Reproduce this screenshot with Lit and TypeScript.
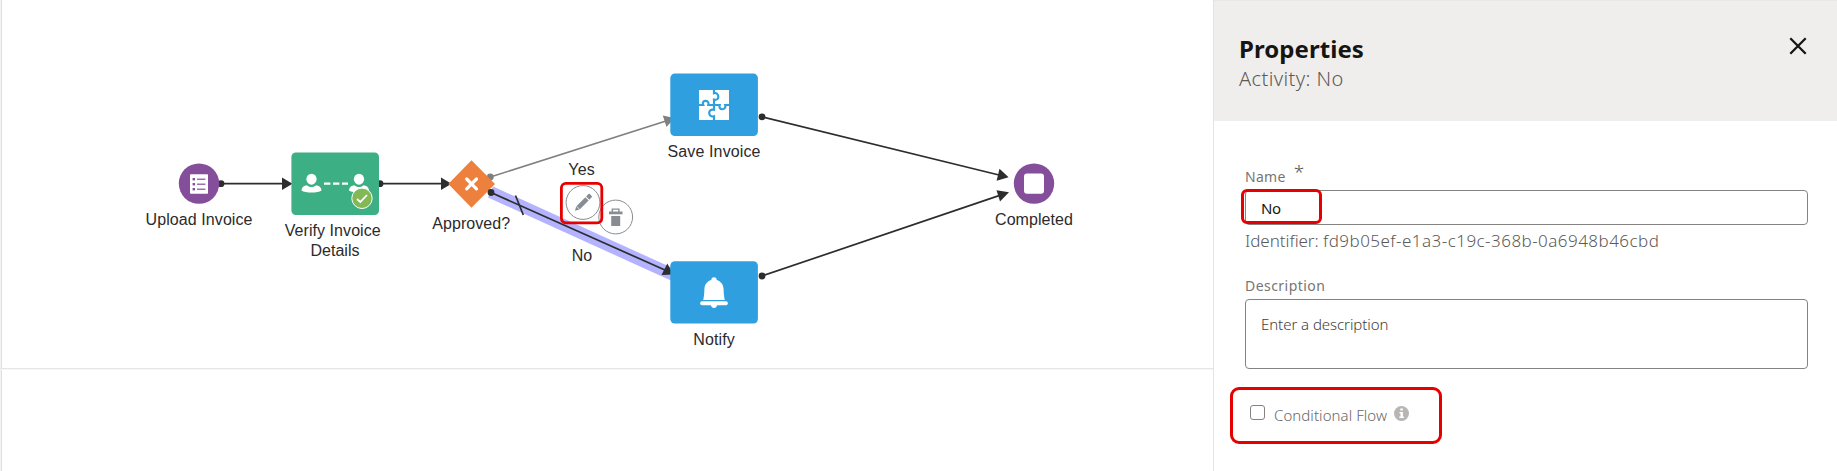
import { LitElement, html, svg, css } from "lit";
import { customElement } from "lit/decorators.js";

interface Label { x: number; y: number; text: string; w: number; }

const LABELS: Label[] = [
  { x: 199, y: 225, text: "Upload Invoice", w: 107 },
  { x: 332.7, y: 236, text: "Verify Invoice", w: 96 },
  { x: 335, y: 256, text: "Details", w: 49 },
  { x: 471.2, y: 229, text: "Approved?", w: 78 },
  { x: 581.5, y: 175, text: "Yes", w: 26.5 },
  { x: 582, y: 260.5, text: "No", w: 20.5 },
  { x: 714, y: 157, text: "Save Invoice", w: 93 },
  { x: 714, y: 345, text: "Notify", w: 41.5 },
  { x: 1034, y: 225, text: "Completed", w: 78 },
];

@customElement("flow-canvas")
class FlowCanvas extends LitElement {
  static styles = css`
    :host { display: block; width: 1213px; height: 471px; background: #fff; }
    svg { display: block; }
    .label { font: 16px "Liberation Sans", Arial, sans-serif; fill: #2b2b2b; text-anchor: middle; }
    .edge { stroke: #2d2d2d; stroke-width: 1.7; fill: none; }
    .ink { fill: #2d2d2d; }
    .start { fill: #854e9b; }
    .task { fill: #3caf85; }
    .service { fill: #309fdf; }
    .tool { fill: #fff; stroke: #878d92; stroke-width: 1; }
    .glyph { fill: #878d92; }
    .mark { fill: none; stroke: #e60000; stroke-width: 2.8; }
    .white { fill: #fff; }
  `;

  render() {
    return html`<svg width="1213" height="471" viewBox="0 0 1213 471">
      <rect x="0" y="0" width="1" height="471" fill="#f4f4f4"/>
      <rect x="1" y="0" width="1" height="471" fill="#dedede"/>
      <rect x="0" y="368" width="1213" height="1" fill="#e6e6e6"/>
      <rect x="0" y="369" width="1213" height="1" fill="#f6f6f6"/>

      <line x1="490.5" y1="192" x2="680" y2="278" stroke="#b3b3ff" stroke-width="12"/>

      <circle class="ink" cx="221" cy="183.7" r="3.4"/>
      <line class="edge" x1="221" y1="183.7" x2="284" y2="183.7"/>
      <path class="ink" d="M282 177.4L292.5 183.7L282 190Z"/>
      <circle class="ink" cx="380" cy="183.7" r="3.4"/>
      <line class="edge" x1="380" y1="183.7" x2="443" y2="183.7"/>
      <path class="ink" d="M441 177.4L451.5 183.7L441 190Z"/>

      <circle cx="490.3" cy="177" r="3.4" fill="#808080"/>
      <line x1="490.3" y1="177" x2="666" y2="121" stroke="#808080" stroke-width="1.6"/>
      <path d="M662.8 115.5L674.5 118L666.5 127Z" fill="#808080"/>

      <line class="edge" x1="491" y1="192.5" x2="666" y2="270.5"/>
      <line class="edge" x1="515.5" y1="195.5" x2="523.3" y2="215"/>
      <path class="ink" d="M667.3 263.5L673.5 274.6L661.5 275Z"/>

      <circle class="ink" cx="762" cy="116.8" r="3.4"/>
      <line class="edge" x1="762" y1="116.8" x2="999" y2="175"/>
      <path class="ink" d="M999.5 168.8L1008.6 177.3L996.6 180.8Z"/>
      <circle class="ink" cx="762" cy="276" r="3.4"/>
      <line class="edge" x1="762" y1="276" x2="999" y2="195.6"/>
      <path class="ink" d="M996.5 190.3L1009 192.2L1000 201.6Z"/>

      <circle class="start" cx="199" cy="183.6" r="20.2"/>
      <rect class="white" x="190" y="174.3" width="18" height="19.4" rx=".8"/>
      ${[179.2, 184.2, 189.2].map((y) => svg`
        <rect class="start" x="192.6" y=${y - 1.2} width="2.4" height="2.4"/>
        <rect class="start" x="197" y=${y - 0.6} width="8.4" height="1.2"/>`)}

      <rect class="task" x="291.4" y="152.4" width="87.6" height="62.6" rx="4.5"/>
      ${[311.5, 359].map((x) => svg`
        <ellipse class="white" cx=${x} cy="179.2" rx="5.1" ry="5.5"/>
        <path class="white" transform="translate(${x} 0)" d="M-10 190.5C-9.5 186.5 -7 185.8 -4.6 185.3C-2.5 187.7 2.5 187.7 4.6 185.3C7 185.8 9.5 186.5 10 190.5C6 193.3 -6 193.3 -10 190.5Z"/>`)}
      <path d="M324 183.7h24" stroke="#fff" stroke-width="2.2" stroke-dasharray="6.4 2.6" fill="none"/>
      <circle cx="362" cy="198.3" r="10.2" fill="#82b955" stroke="#fff" stroke-width="1"/>
      <path d="M357 199L360.3 202L367 195" fill="none" stroke="#fff" stroke-width="1.8"/>

      <path d="M471.5 160.3L495 184L471.5 207.7L448.3 184Z" fill="#ec803c"/>
      <path d="M466.7 179L476.5 188.8M476.5 179L466.7 188.8" stroke="#fff" stroke-width="3.2" stroke-linecap="round"/>
      <circle class="ink" cx="491" cy="192.5" r="3.4"/>

      <circle class="tool" cx="615.7" cy="217" r="16.9"/>
      <g class="glyph">
        <path d="M609 211.5h13.5v2.8h-13.5Z"/>
        <path d="M611.6 212v-3.6h8v3.6h-1.4v-2.2h-5.2v2.2Z"/>
        <path d="M611.2 216h9v10h-9Z"/>
      </g>
      <circle class="tool" cx="583" cy="202.5" r="16.9"/>
      <g class="glyph" transform="translate(575 210.8) rotate(-45)">
        <path d="M0 0L4 -2.3V2.3Z"/>
        <path d="M4.6 -2.3H17V2.3H4.6Z"/>
        <path d="M18 -2.3H21.3Q22.3 -2.3 22.3 -1.3V1.3Q22.3 2.3 21.3 2.3H18Z"/>
      </g>
      <rect class="mark" x="561.4" y="183.4" width="40.4" height="39.4" rx="4.5"/>

      <rect class="service" x="670.3" y="73.6" width="87.6" height="62.4" rx="4.5"/>
      <rect class="white" x="699" y="90" width="30" height="30"/>
      <path d="M714 90V93.2C719 91.6 720.5 101 714 99.7V109.8C707.5 108 707.7 118 714 116.3V120M699 105H703.2C700.8 99.5 710.2 99.5 708.3 105H719.7C717.7 110.8 727 110.5 725.2 105H729" fill="none" stroke="#309fdf" stroke-width="2.2"/>

      <rect class="service" x="670.3" y="261.2" width="87.6" height="62.4" rx="4.5"/>
      <g class="white">
        <circle cx="714" cy="280" r="2.7"/>
        <path d="M703.2 300C704 296.5 704.3 294 704.4 289C704.6 283 709 279.7 714 279.7S723.4 283 723.6 289C723.7 294 724 296.5 724.8 300Z"/>
        <rect x="700.2" y="301.2" width="27.6" height="4" rx="1.8"/>
        <path d="M710.8 305H717.2Q716.4 308 714 308T710.8 305Z"/>
      </g>

      <circle class="start" cx="1034" cy="183.6" r="20.2"/>
      <rect class="white" x="1024" y="173.5" width="20" height="20.2" rx="3"/>

      ${LABELS.map((l) => svg`<text class="label" x=${l.x} y=${l.y} textLength=${l.w}>${l.text}</text>`)}
    </svg>`;
  }
}

@customElement("properties-panel")
class PropertiesPanel extends LitElement {
  static styles = css`
    :host {
      display: flex; flex-direction: column; flex: 1; box-sizing: border-box; height: 471px;
      border-left: 1px solid #e3e3e3; background: #fff; color: #5c5a57;
      font-family: "Noto Sans", "Open Sans", sans-serif; white-space: nowrap;
    }
    header {
      display: flex; justify-content: space-between; box-sizing: border-box; height: 121px;
      padding: 32px 30px 0 25px; background: #f0eeec; border-top: 1px solid #e9e7e5;
    }
    .title { font-size: 24px; line-height: 32px; font-weight: 700; color: #161513; letter-spacing: 0.06px; }
    .sub { font-size: 20px; line-height: 26px; font-weight: 300; margin-top: 1px; letter-spacing: 0.4px; }
    .close { display: block; margin-top: 4px; }
    .form { display: flex; flex-direction: column; padding: 46px 29px 0 31px; }
    .cap { font-size: 14px; line-height: 20px; height: 20px; display: flex; gap: 8px; letter-spacing: 0.3px; color: #777573; }
    .cap.desc { letter-spacing: 0.45px; }
    .star { font-size: 19px; line-height: 20px; font-weight: 300; margin-top: -5px; color: #55534f; }
    .input {
      position: relative; box-sizing: border-box; height: 35px; margin-top: 3px; padding-left: 15px;
      border: 1px solid #858381; border-radius: 4px; font-size: 15px; line-height: 35px; letter-spacing: -0.5px; color: #161513;
    }
    .mark { position: absolute; left: -5px; top: -2px; width: 75px; height: 29px; border: 3px solid #e60000; border-radius: 6px; }
    .ident { margin-top: 5px; font-size: 17px; line-height: 22px; height: 22px; font-weight: 300; letter-spacing: -0.05px; }
    .uuid { letter-spacing: 0.46px; }
    .desc { margin-top: 24px; }
    .area {
      box-sizing: border-box; height: 70px; margin-top: 3px; padding: 13px 15px; border: 1px solid #858381;
      border-radius: 4px; font-size: 15px; line-height: 22px; font-weight: 300; letter-spacing: -0.06px; color: #3f3d3a;
    }
    .cond {
      display: flex; align-items: flex-start; box-sizing: border-box; width: 212px; height: 57px; margin: 18px 0 0 -15px;
      padding: 15px 0 0 17px; border: 3px solid #e60000; border-radius: 9px;
    }
    .box { box-sizing: border-box; width: 15px; height: 15px; border: 1.5px solid #858381; border-radius: 3px; margin-right: 9px; }
    .flow { font-size: 15px; line-height: 20px; margin-right: 7px; font-weight: 300; letter-spacing: 0.06px; color: #6a6865; }
    .info { margin-top: 1px; }
  `;

  render() {
    return html`
      <header>
        <div>
          <div class="title">Properties</div>
          <div class="sub">Activity: No</div>
        </div>
        <svg class="close" width="18" height="18" viewBox="0 0 18 18"><path d="M1.3 1.3L16.7 16.7M16.7 1.3L1.3 16.7" stroke="#161513" stroke-width="2.3"/></svg>
      </header>
      <div class="form">
        <div class="cap"><span>Name</span><span class="star">*</span></div>
        <div class="input"><span>No</span><div class="mark"></div></div>
        <div class="ident">Identifier: <span class="uuid">fd9b05ef-e1a3-c19c-368b-0a6948b46cbd</span></div>
        <div class="cap desc"><span>Description</span></div>
        <div class="area"><span>Enter a description</span></div>
        <div class="cond">
          <div class="box"></div>
          <span class="flow">Conditional Flow</span>
          <svg class="info" width="15" height="15" viewBox="0 0 15 15"><circle cx="7.5" cy="7.5" r="7.5" fill="#b8b6b4"/><path d="M6.3 2.6h2.6v2h-2.6ZM5.5 6h3.4v4.6h1v1.4h-4.6v-1.4h1.2v-3.2h-1Z" fill="#fff"/></svg>
        </div>
      </div>`;
  }
}

@customElement("app-root")
class AppRoot extends LitElement {
  static styles = css`
    :host { display: flex; width: 1837px; height: 471px; overflow: hidden; background: #fff; }
  `;

  render() {
    return html`<flow-canvas></flow-canvas><properties-panel></properties-panel>`;
  }
}
